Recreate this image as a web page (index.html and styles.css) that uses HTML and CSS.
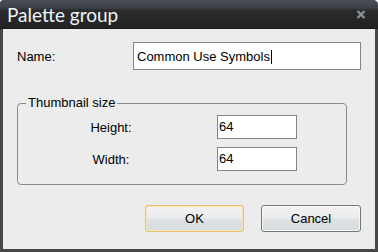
FILE: index.html
```html
<!DOCTYPE html>
<html lang="en">
<head>
<meta charset="utf-8"/>
<title>Palette group</title>
<link rel="stylesheet" href="styles.css">
</head>
<body>
<div class="window">
  <div class="titlebar">
    <span class="title">Palette group</span>
    <svg class="close" width="10" height="9" viewBox="0 0 10 9"><path d="M1.5 1 L8.5 8 M8.5 1 L1.5 8" stroke="#8a9397" stroke-width="2.4" fill="none"/></svg>
  </div>
  <div class="content">
    <div class="name-row">
      <label for="groupName">Name:</label>
      <div class="input wide"><span>Common Use Symbols</span><i class="caret"></i></div>
    </div>
    <fieldset class="group">
      <legend>Thumbnail size</legend>
      <div class="size-row">
        <label>Height:</label>
        <div class="input small"><span>64</span></div>
      </div>
      <div class="size-row">
        <label>Width:</label>
        <div class="input small"><span>64</span></div>
      </div>
    </fieldset>
    <div class="buttons">
      <button class="btn default">OK</button>
      <button class="btn">Cancel</button>
    </div>
  </div>
</div>
</body>
</html>
```

FILE: styles.css
```css
html, body { margin: 0; padding: 0; background: #ffffff; }
body { font-family: "Liberation Sans", Arial, sans-serif; font-size: 13px; color: #000; }
.window { width: 378px; height: 252px; box-sizing: border-box; display: flex; flex-direction: column; background: #474747; border-radius: 4px 5px 0 0; overflow: hidden; }
.titlebar { height: 29px; flex: none; display: flex; align-items: center; justify-content: space-between; padding: 0 12px 0 7px; box-sizing: border-box; background: linear-gradient(#4a4f57 0px, #3b3f45 8px, #2c2c2c 10px, #232323 100%); border-bottom: 1px solid #1b1b1b; }
.title { font-family: Lato, "Open Sans", sans-serif; font-size: 19px; color: #eef4fa; line-height: 29px; margin-top: 0; }
.close { display: block; margin-top: 1px; }
.content { flex: 1; margin: 0 3px 3px 3px; background: #ececec; padding: 13px 14px 0 14px; display: flex; flex-direction: column; }
.name-row { display: flex; align-items: center; height: 28px; }
.name-row label { width: 116px; }
.input { box-sizing: border-box; background: #fff; border: 1px solid #848484; display: flex; align-items: center; }
.input.wide { flex: 1; height: 28px; padding-left: 3px; }
.input.small { width: 80px; height: 24px; padding-left: 1px; padding-bottom: 2px; }
.caret { display: inline-block; width: 1px; height: 14px; background: #000; margin-left: 1px; margin-top: 1px; }
.group { margin: 26px 14px 0 0; padding: 5px 0 13px 8px; border: 1px solid #8a8a8a; border-radius: 4px; }
.group legend { padding: 0 2px; line-height: 14px; }
.size-row { display: grid; grid-template-columns: 170px 80px; column-gap: 21px; align-items: center; height: 24px; }
.size-row + .size-row { margin-top: 8px; }
.size-row label { text-align: center; }
.buttons { display: flex; justify-content: flex-end; gap: 17px; margin-top: 20px; }
.btn { width: 100px; height: 27px; font-family: inherit; font-size: 13px; color: #000; border: 1px solid #767676; border-radius: 3px; background: linear-gradient(#f3f3f3 0%, #ebebeb 48%, #dde2e5 52%, #d6dbde 100%); box-shadow: inset 0 0 0 1px #f8f8f8; padding: 0; }
.btn.default { width: 99px; border-color: #e3c270; box-shadow: inset 0 0 0 1px #f6e7b8; }
```
